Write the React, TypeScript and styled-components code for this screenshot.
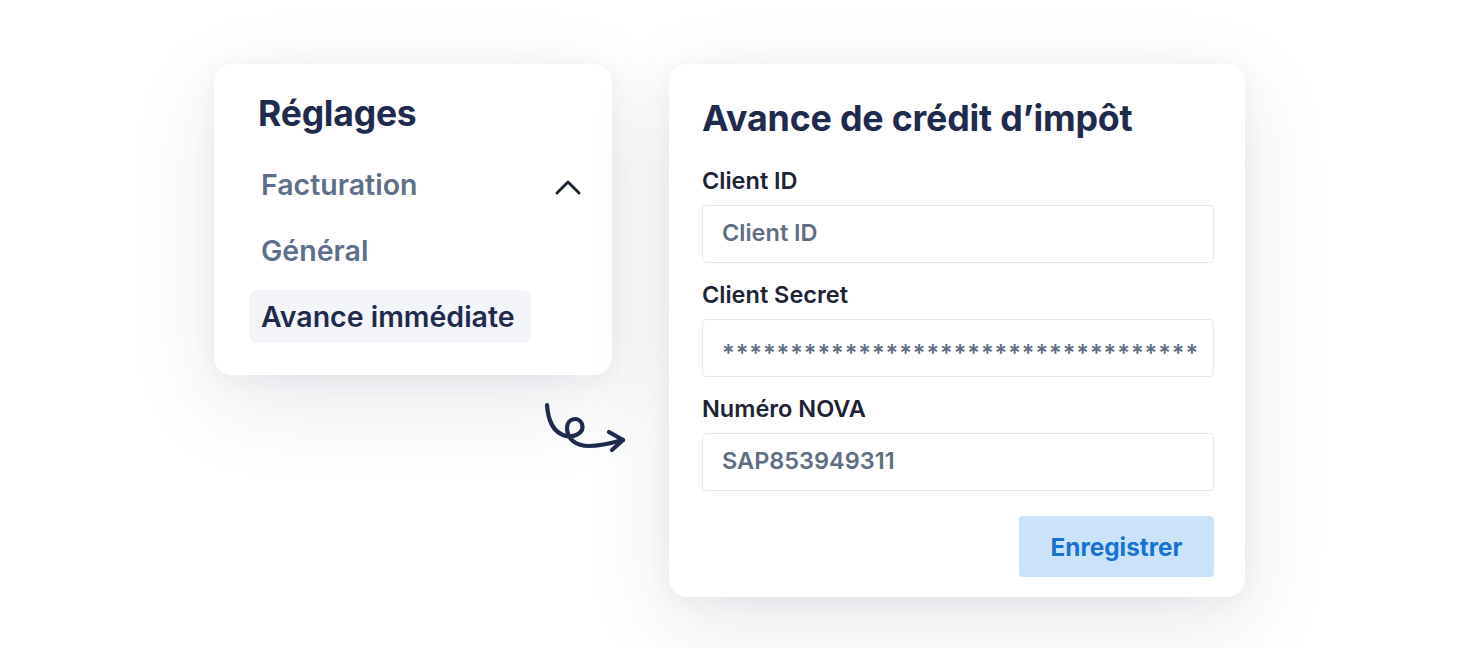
import { FC } from 'react'
import styled, { createGlobalStyle } from 'styled-components'

const GlobalStyle = createGlobalStyle`
	html, body {
		margin: 0;
		padding: 0;
		background: #ffffff;
		font-family: Inter, 'Noto Sans', sans-serif;
		-webkit-font-smoothing: antialiased;
	}
`

const Page = styled.div`
	width: 1458px;
	height: 648px;
	box-sizing: border-box;
	padding: 64px 0 0 214px;
	display: flex;
	align-items: flex-start;
	gap: 57px;
	overflow: hidden;
`

const Card = styled.div`
	background: #ffffff;
	border-radius: 18px;
	box-sizing: border-box;
	box-shadow: 0 26px 90px rgba(30, 40, 70, 0.1), 0 4px 26px rgba(30, 40, 70, 0.05);
`

const LeftColumn = styled.div`
	display: flex;
	flex-direction: column;
	width: 398px;
`

const MenuCard = styled(Card)`
	width: 398px;
	padding: 28px 30px 32px 35px;
	display: flex;
	flex-direction: column;
`

const MenuTitle = styled.h2`
	margin: 0 0 22px 9px;
	font-size: 35.5px;
	line-height: 44px;
	font-weight: 700;
	color: #1f2b4d;
	letter-spacing: -0.2px;
`

const MenuList = styled.div`
	display: flex;
	flex-direction: column;
	gap: 13px;
`

const MenuItem = styled.div<{ $active?: boolean }>`
	height: 53px;
	display: flex;
	align-items: center;
	justify-content: space-between;
	align-self: ${({ $active }) => ($active ? 'flex-start' : 'stretch')};
	padding: 0 0 0 12px;
	padding-right: ${({ $active }) => ($active ? '16px' : '0')};
	border-radius: 8px;
	background: ${({ $active }) => ($active ? '#f3f5f9' : 'transparent')};
	color: ${({ $active }) => ($active ? '#1f2b4d' : '#5e7089')};
	font-size: 28.5px;
	font-weight: 600;
`

const Chevron = styled.svg`
	width: 28px;
	height: 18px;
	margin-top: 4px;
`

const ArrowWrap = styled.div`
	padding: 24px 0 0 327px;
`

const FormCard = styled(Card)`
	width: 576px;
	padding: 32px 31px 20px 33px;
	display: flex;
	flex-direction: column;
`

const FormTitle = styled.h1`
	margin: 0 0 27px;
	font-size: 35.8px;
	line-height: 44px;
	font-weight: 700;
	color: #1f2b4d;
	letter-spacing: -0.2px;
`

const Fields = styled.div`
	display: flex;
	flex-direction: column;
	gap: 18px;
`

const Field = styled.div`
	display: flex;
	flex-direction: column;
	gap: 10px;
`

const Label = styled.label`
	font-size: 23.5px;
	line-height: 28px;
	font-weight: 600;
	color: #1c2436;
`

const Input = styled.div<{ $secret?: boolean }>`
	height: 58px;
	box-sizing: border-box;
	border: 1px solid #e6e8ec;
	border-radius: 4px;
	padding: 0 0 0 19px;
	display: flex;
	align-items: center;
	overflow: hidden;
	white-space: nowrap;
	font-size: 23.5px;
	font-weight: 600;
	color: #606e83;
	letter-spacing: ${({ $secret }) => ($secret ? '0.95px' : '0')};
	padding-top: ${({ $secret }) => ($secret ? '8px' : '0')};
	padding-bottom: ${({ $secret }) => ($secret ? '0' : '3px')};
`

const Actions = styled.div`
	display: flex;
	justify-content: flex-end;
	margin-top: 25px;
`

const SaveButton = styled.button`
	width: 195px;
	height: 61px;
	border: none;
	border-radius: 4px;
	background: #cae3fb;
	color: #1672d2;
	font-family: Inter, 'Noto Sans', sans-serif;
	font-size: 24.3px;
	font-weight: 700;
	cursor: pointer;
`

const menu = [
	{ label: 'Facturation', open: true },
	{ label: 'Général' },
	{ label: 'Avance immédiate', active: true },
]

const fields = [
	{ label: 'Client ID', value: 'Client ID' },
	{ label: 'Client Secret', value: '*'.repeat(35), secret: true },
	{ label: 'Numéro NOVA', value: 'SAP853949311' },
]

const CurlyArrow: FC = () => (
	<svg width="90" height="60" viewBox="0 0 90 60" fill="none">
		<path
			d="M6 6 C 7 20, 12 32, 22 36 C 32 40, 44 34, 41 25 C 38 17, 26 19, 26 29 C 26 40, 35 47, 48 47 C 60 47, 71 44, 82 41"
			stroke="#1f2b4d"
			strokeWidth="4.2"
			strokeLinecap="round"
			strokeLinejoin="round"
		/>
		<path d="M68 33 L82 41 L71 51" stroke="#1f2b4d" strokeWidth="4.2" strokeLinecap="round" strokeLinejoin="round" />
	</svg>
)

const App: FC = () => (
	<>
		<GlobalStyle />
		<Page>
			<LeftColumn>
				<MenuCard>
					<MenuTitle>Réglages</MenuTitle>
					<MenuList>
						{menu.map((item) => (
							<MenuItem key={item.label} $active={item.active}>
								{item.label}
								{item.open && (
									<Chevron viewBox="0 0 28 18">
										<polyline
											points="3,15 14,4 25,15"
											fill="none"
											stroke="#1c2436"
											strokeWidth="2.9"
											strokeLinecap="round"
											strokeLinejoin="round"
										/>
									</Chevron>
								)}
							</MenuItem>
						))}
					</MenuList>
				</MenuCard>
				<ArrowWrap>
					<CurlyArrow />
				</ArrowWrap>
			</LeftColumn>
			<FormCard>
				<FormTitle>Avance de crédit d’impôt</FormTitle>
				<Fields>
					{fields.map((f) => (
						<Field key={f.label}>
							<Label>{f.label}</Label>
							<Input $secret={f.secret}>{f.value}</Input>
						</Field>
					))}
				</Fields>
				<Actions>
					<SaveButton>Enregistrer</SaveButton>
				</Actions>
			</FormCard>
		</Page>
	</>
)

export default App
